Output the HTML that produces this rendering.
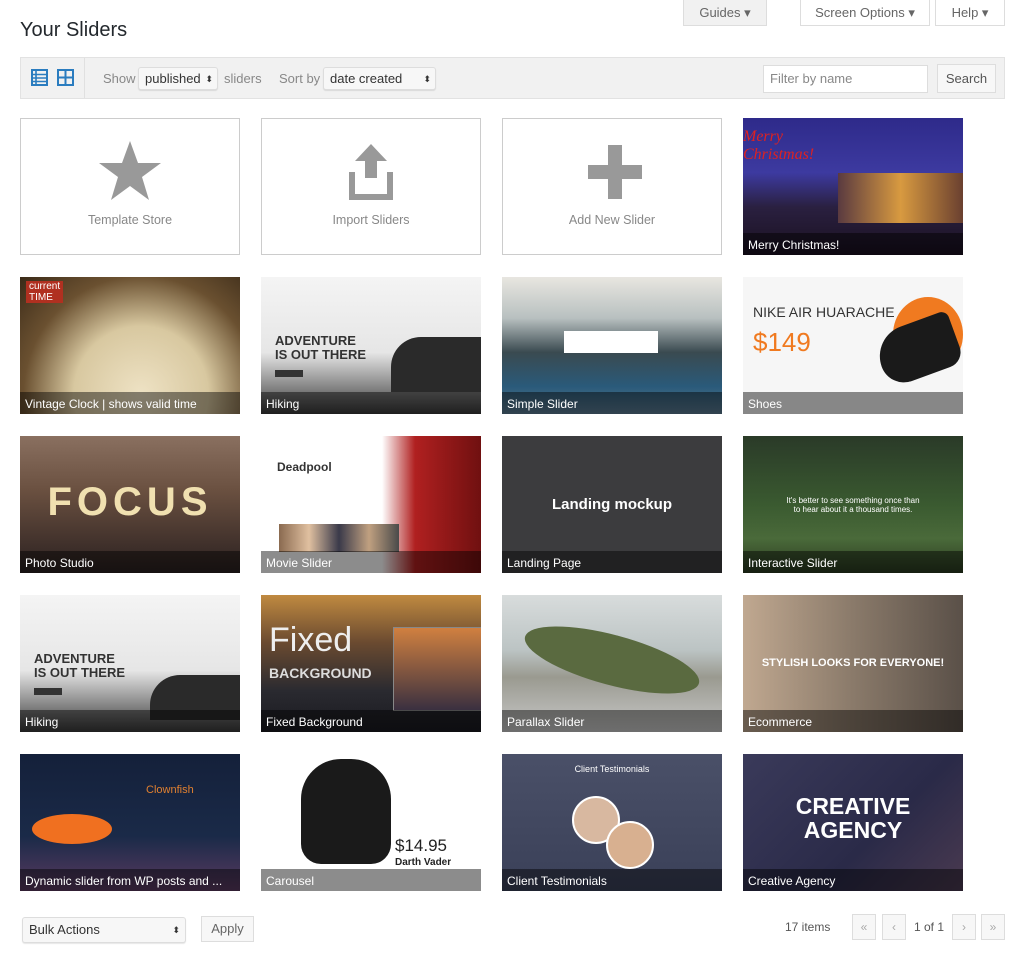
<!DOCTYPE html><html><head><style>
body{margin:0;width:1024px;height:964px;background:#fff;font-family:"Liberation Sans",sans-serif;position:relative;overflow:hidden;color:#333}
.a{position:absolute}
.tb{border:1px solid #ddd;background:#fff;font-size:13px;color:#666;text-align:center;line-height:26px;box-sizing:border-box}
.t{position:absolute;width:220px;height:137px;box-sizing:border-box;overflow:hidden}
.w{border:1px solid #ccc;background:#fff}
.w span{position:absolute;left:0;right:0;top:94px;text-align:center;color:#888;font-size:12.5px}
.cap{position:absolute;left:0;right:0;bottom:0;height:22px;background:rgba(0,0,0,.45);color:#fff;font-size:12px;line-height:24px;padding-left:5px;white-space:nowrap}
.sel{position:absolute;background:#f7f7f7;border:1px solid #ddd;border-radius:3px;box-shadow:0 1px 1px rgba(0,0,0,.1);font-size:13px;line-height:22px;padding-left:6px;box-sizing:border-box;color:#333}
.pg{position:absolute;top:914px;width:24px;height:26px;border:1px solid #ddd;background:#f7f7f7;box-sizing:border-box;color:#aaa;font-size:12px;text-align:center;line-height:24px}
</style></head><body>
<div class="a" style="left:20px;top:19px;font-size:20px;color:#23282d">Your Sliders</div>
<div class="a tb" style="left:683px;top:0;width:84px;height:26px;background:#f1f1f1;border-top:0">Guides ▾</div>
<div class="a tb" style="left:800px;top:0;width:130px;height:26px;border-top:0">Screen Options ▾</div>
<div class="a tb" style="left:935px;top:0;width:70px;height:26px;border-top:0">Help ▾</div>
<div class="a" style="left:20px;top:57px;width:985px;height:42px;background:#f1f1f1;border:1px solid #e2e2e2;box-sizing:border-box"></div>
<div class="a" style="left:84px;top:58px;width:1px;height:40px;background:#e0e0e0"></div>
<svg class="a" style="left:31px;top:69px" width="17" height="17"><rect x="1" y="1" width="15" height="15" fill="none" stroke="#2a7cbf" stroke-width="2"/><path d="M1 5.5h15M1 9h15M1 12.5h15M5 1v15" stroke="#2a7cbf" stroke-width="1.6"/></svg>
<svg class="a" style="left:57px;top:69px" width="17" height="17"><rect x="1" y="1" width="15" height="15" fill="none" stroke="#2a7cbf" stroke-width="2"/><path d="M1 8.5h15M8.5 1v15" stroke="#2a7cbf" stroke-width="2"/></svg>
<div class="a" style="left:103px;top:71px;font-size:13px;color:#888">Show</div>
<div class="sel" style="left:138px;top:67px;width:80px;height:23px">published <span style="position:absolute;right:4px;font-size:9px">⬍</span></div>
<div class="a" style="left:224px;top:71px;font-size:13px;color:#888">sliders</div>
<div class="a" style="left:279px;top:71px;font-size:13px;color:#888">Sort by</div>
<div class="sel" style="left:323px;top:67px;width:113px;height:23px">date created <span style="position:absolute;right:4px;font-size:9px">⬍</span></div>
<div class="a" style="left:763px;top:65px;width:165px;height:28px;background:#fff;border:1px solid #ddd;box-sizing:border-box;font-size:13px;color:#888;line-height:26px;padding-left:6px">Filter by name</div>
<div class="a tb" style="left:937px;top:64px;width:59px;height:29px;background:#f7f7f7;color:#555;line-height:27px">Search</div>

<div class="t w" style="left:20px;top:118px"><svg class="a" style="left:77px;top:21px" width="64" height="62"><polygon points="32,1 40,23 63,23 44,37 51,60 32,46 13,60 20,37 1,23 24,23" fill="#999"/></svg><span>Template Store</span></div>
<div class="t w" style="left:261px;top:118px"><svg class="a" style="left:87px;top:25px" width="44" height="56"><polygon points="22,0 38,17 28,17 28,34 16,34 16,17 6,17" fill="#999"/><path d="M3 28v25h38V28" fill="none" stroke="#999" stroke-width="6"/></svg><span>Import Sliders</span></div>
<div class="t w" style="left:502px;top:118px"><svg class="a" style="left:85px;top:26px" width="54" height="54"><path d="M20 0h14v20h20v14H34v20H20V34H0V20h20z" fill="#999"/></svg><span>Add New Slider</span></div>
<div class="t" style="left:743px;top:118px;background:linear-gradient(180deg,#2e2a8a 0%,#3d3aa0 40%,#2a2040 65%,#1a1020 100%)"><div class="a" style="left:0;top:10px;color:#d22;font:italic 16px 'Liberation Serif',serif">Merry<br>Christmas!</div><div class="a" style="left:95px;top:55px;width:125px;height:50px;background:linear-gradient(90deg,#5a3a40,#d89a40,#6a4030)"></div><div class="cap">Merry Christmas!</div></div>

<div class="t" style="left:20px;top:277px;background:radial-gradient(circle at 55% 85%,#eee2c4 0,#d8c8a0 40%,#6a5030 70%,#3a2a18 100%)"><div class="a" style="left:6px;top:4px;color:#fff;font-size:10px;background:#b03020;padding:0 3px">current<br>TIME</div><div class="cap">Vintage Clock | shows valid time</div></div>
<div class="t" style="left:261px;top:277px;background:linear-gradient(180deg,#f4f4f4 0%,#e6e6e6 55%,#9a9a9a 75%,#3a3a3a 100%)"><div class="a" style="left:14px;top:57px;font-size:13px;font-weight:bold;color:#333;line-height:14px">ADVENTURE<br>IS OUT THERE</div><div class="a" style="left:14px;top:93px;width:28px;height:7px;background:#333"></div><div class="a" style="left:130px;top:60px;width:90px;height:55px;background:#2a2a2a;border-radius:30px 0 0 0"></div><div class="cap">Hiking</div></div>
<div class="t" style="left:502px;top:277px;background:linear-gradient(180deg,#e8e6e0 0%,#b8c0c0 30%,#3a4a50 55%,#2a5a7a 80%,#5a7a90 100%)"><div class="a" style="left:62px;top:54px;width:94px;height:22px;background:#fff"></div><div class="cap">Simple Slider</div></div>
<div class="t" style="left:743px;top:277px;background:#f6f6f6"><div class="a" style="left:10px;top:27px;font-size:14px;color:#333">NIKE AIR HUARACHE</div><div class="a" style="left:10px;top:50px;font-size:26px;color:#f07a20">$149</div><div class="a" style="left:150px;top:20px;width:70px;height:75px;border-radius:50%;background:#f07a20"></div><div class="a" style="left:135px;top:45px;width:80px;height:55px;background:#1a1a1a;border-radius:40px 10px 20px 30px;transform:rotate(-20deg)"></div><div class="cap">Shoes</div></div>

<div class="t" style="left:20px;top:436px;background:linear-gradient(180deg,#8a7060 0%,#6a5040 40%,#2a2020 100%)"><div class="a" style="left:0;right:0;top:44px;text-align:center;font-size:40px;letter-spacing:5px;color:#f0e0b0;font-weight:bold">FOCUS</div><div class="cap">Photo Studio</div></div>
<div class="t" style="left:261px;top:436px;background:linear-gradient(90deg,#fff 0%,#fff 55%,#b02020 70%,#701010 100%)"><div class="a" style="left:16px;top:24px;font-size:12px;font-weight:bold">Deadpool</div><div class="a" style="left:18px;top:88px;width:120px;height:28px;background:linear-gradient(90deg,#8a6a50,#e0c0a0,#3a3a4a,#c0a080,#4a4a4a)"></div><div class="cap">Movie Slider</div></div>
<div class="t" style="left:502px;top:436px;background:#3c3c3e"><div class="a" style="left:0;right:0;top:60px;text-align:center;color:#fff;font-size:15px;font-weight:bold">Landing mockup</div><div class="cap">Landing Page</div></div>
<div class="t" style="left:743px;top:436px;background:linear-gradient(180deg,#2a3a28 0%,#3a5a30 50%,#4a6a3a 75%,#2a3a20 100%)"><div class="a" style="left:0;right:0;top:60px;text-align:center;color:#fff;font-size:8px">It's better to see something once than<br>to hear about it a thousand times.</div><div class="cap">Interactive Slider</div></div>

<div class="t" style="left:20px;top:595px;background:linear-gradient(180deg,#f4f4f4 0%,#e6e6e6 55%,#9a9a9a 75%,#3a3a3a 100%)"><div class="a" style="left:14px;top:57px;font-size:13px;font-weight:bold;color:#333;line-height:14px">ADVENTURE<br>IS OUT THERE</div><div class="a" style="left:14px;top:93px;width:28px;height:7px;background:#333"></div><div class="a" style="left:130px;top:80px;width:90px;height:45px;background:#2a2a2a;border-radius:30px 0 0 0"></div><div class="cap">Hiking</div></div>
<div class="t" style="left:261px;top:595px;background:linear-gradient(180deg,#c08a40 0%,#6a4a30 35%,#2a2a30 70%,#1a1a20 100%)"><div class="a" style="left:8px;top:26px;font-size:34px;color:#eee;font-weight:300">Fixed</div><div class="a" style="left:8px;top:70px;font-size:14px;color:#ddd;font-weight:bold">BACKGROUND</div><div class="a" style="left:132px;top:32px;width:88px;height:82px;background:linear-gradient(180deg,#d08040,#3a3040);border:1px solid #888"></div><div class="cap">Fixed Background</div></div>
<div class="t" style="left:502px;top:595px;background:linear-gradient(180deg,#d8dcdc 0%,#bcc4c4 40%,#9a9a90 60%,#c8c8c8 100%)"><div class="a" style="left:20px;top:40px;width:180px;height:50px;background:#5a6a40;border-radius:50%;transform:rotate(15deg)"></div><div class="cap">Parallax Slider</div></div>
<div class="t" style="left:743px;top:595px;background:linear-gradient(90deg,#c0a890 0%,#8a7a6a 50%,#5a5048 100%)"><div class="a" style="left:0;right:0;top:62px;text-align:center;color:#fff;font-size:11px;font-weight:bold">STYLISH LOOKS FOR EVERYONE!</div><div class="cap">Ecommerce</div></div>

<div class="t" style="left:20px;top:754px;background:linear-gradient(180deg,#14203a 0%,#1a2a48 60%,#5a3a60 100%)"><div class="a" style="left:126px;top:30px;color:#e08030;font-size:11px">Clownfish</div><div class="a" style="left:12px;top:60px;width:80px;height:30px;border-radius:50%;background:#f07020"></div><div class="cap">Dynamic slider from WP posts and ...</div></div>
<div class="t" style="left:261px;top:754px;background:#fff"><div class="a" style="left:40px;top:5px;width:90px;height:105px;background:#1a1a1a;border-radius:40px 40px 20px 20px"></div><div class="a" style="left:134px;top:82px;font-size:17px;color:#222">$14.95</div><div class="a" style="left:134px;top:103px;font-size:10px;color:#222;font-weight:bold">Darth Vader</div><div class="cap">Carousel</div></div>
<div class="t" style="left:502px;top:754px;background:linear-gradient(180deg,#4a5068 0%,#3a4058 100%)"><div class="a" style="left:0;right:0;top:10px;text-align:center;color:#fff;font-size:9px">Client Testimonials</div><div class="a" style="left:70px;top:42px;width:44px;height:44px;border-radius:50%;background:#d8b8a0;border:2px solid #fff"></div><div class="a" style="left:104px;top:67px;width:44px;height:44px;border-radius:50%;background:#d8b090;border:2px solid #fff"></div><div class="cap">Client Testimonials</div></div>
<div class="t" style="left:743px;top:754px;background:linear-gradient(135deg,#3a3a5a 0%,#2a2a48 60%,#4a3a50 100%)"><div class="a" style="left:0;right:0;top:40px;text-align:center;color:#fff;font-size:23px;font-weight:bold;line-height:24px">CREATIVE<br>AGENCY</div><div class="cap">Creative Agency</div></div>

<div class="sel" style="left:22px;top:917px;width:164px;height:26px;line-height:24px">Bulk Actions <span style="position:absolute;right:5px;font-size:9px">⬍</span></div>
<div class="a tb" style="left:201px;top:916px;width:53px;height:26px;background:#f7f7f7;line-height:24px">Apply</div>
<div class="a" style="left:785px;top:920px;font-size:12px;color:#555">17 items</div>
<div class="pg" style="left:852px">«</div><div class="pg" style="left:882px">‹</div>
<div class="a" style="left:914px;top:920px;font-size:12px;color:#555">1 of 1</div>
<div class="pg" style="left:952px">›</div><div class="pg" style="left:981px">»</div>
</body></html>
